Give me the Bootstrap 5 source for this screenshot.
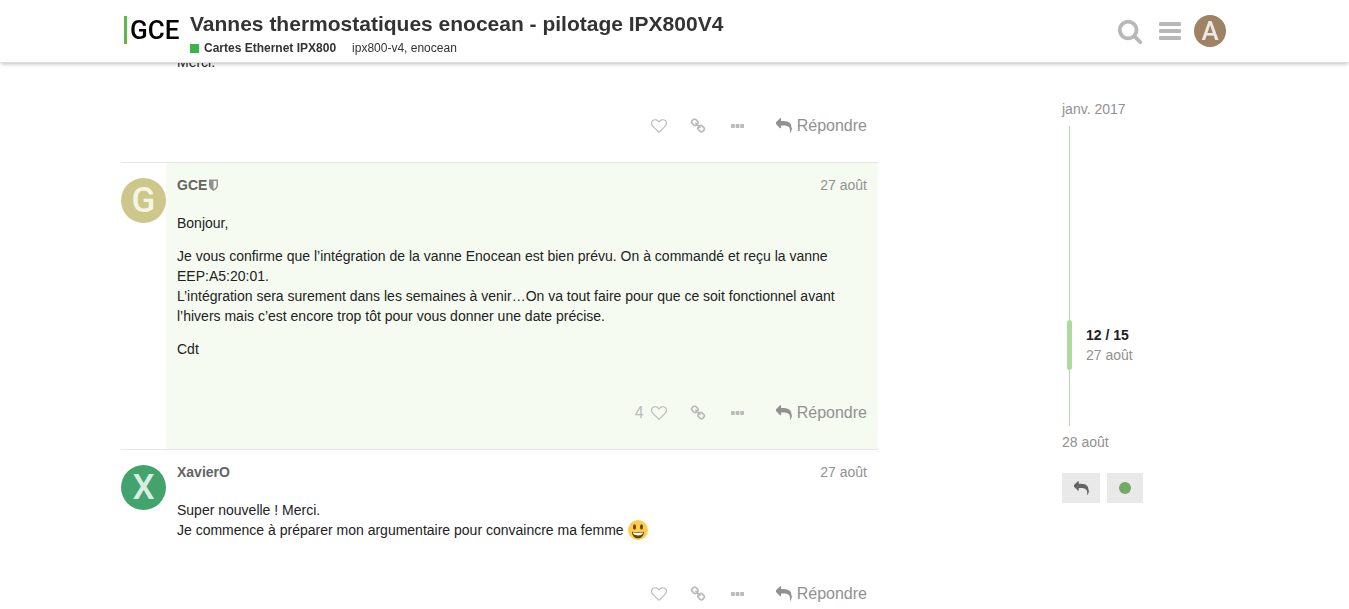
<!DOCTYPE html>
<html lang="fr">
<head>
<meta charset="utf-8">
<meta name="viewport" content="width=device-width, initial-scale=1">
<title>Vannes thermostatiques enocean - pilotage IPX800V4</title>
<link href="https://cdn.jsdelivr.net/npm/bootstrap@5.3.0/dist/css/bootstrap.min.css" rel="stylesheet">
<style>
body { font: 14px/20px "Liberation Sans", Arial, sans-serif; color: #222; background: #fff; }
a { color: inherit; text-decoration: none; }
svg { display: block; fill: currentColor; }
.wrap { max-width: 1107px; margin: 0 auto; }
.site-header { height: 63px; background: #fff; box-shadow: 0 2px 4px -1px rgba(0,0,0,.25); border-bottom: 1px solid #ddd; }
.logo { margin-left: 3px; width: 56px; color: #000; padding-bottom: 2px; }
.logo-bar { width: 3px; height: 28px; flex: none; background: #62b846; }
.logo-text { font: 500 26px/28px Roboto, sans-serif; margin-left: 3px; }
.topic-title { font-size: 21px; line-height: 28px; font-weight: 700; color: #333; }
.topic-meta { font-size: 12px; line-height: 20px; color: #333; }
.swatch { width: 9px; height: 9px; margin-right: 5px; background: #3ab54a; }
.topic-box { margin-left: 10px; padding-top: 6px; }
.head-icons { color: #b8b8b8; margin-right: 2px; }
.head-icons .menu-link { margin-right: 13px; }
.round { border-radius: 50%; display: flex; align-items: center; justify-content: center; flex: none; font-family: Roboto, sans-serif; font-weight: 500; color: rgba(255,255,255,.82); }
.round-sm { width: 32px; height: 32px; font-size: 26px; line-height: 32px; background: #9d8263; }
.round-lg { width: 45px; height: 45px; font-size: 35px; line-height: 46px; margin-top: 15px; }
.page { padding-top: 52px; }
.stream { flex: 0 1 757px; min-width: 0; }
.post { display: flex; }
.post + .post { border-top: 1px solid #e6e6e6; }
.post-body { flex: 1; min-width: 0; padding: 12px 11px 16px; }
.first .post-body { margin-left: 45px; padding-top: 0; }
.staff .post-body { background: #f5fbf1; }
.post-head { margin-bottom: 18px; }
.author { font-weight: 700; color: #646464; }
.author svg { margin-left: 2px; }
.muted { color: #919191; }
.cooked p { margin-bottom: 13px; }
.cooked p:last-child { margin-bottom: 0; }
.emoji { display: inline-block; width: 20px; height: 20px; vertical-align: middle; margin: -3px 0 -1px; }
.controls { margin-top: 34px; height: 40px; display: flex; justify-content: flex-end; align-items: center; color: #bababa; font-size: 16px; }
.controls button, .tl-actions button { border: 0; background: none; padding: 0; color: inherit; display: flex; align-items: center; }
.controls .icon-btn { width: 39px; height: 32px; justify-content: center; }
.controls .reply { color: #919191; margin-left: 19px; gap: 5px; }
.likes { margin-right: -4px; }
.timeline { margin-left: 184px; padding-top: 47px; width: 120px; }
.track { height: 300px; margin: 7px 0 6px 7px; border-left: 1px solid #b0dba4; padding-top: 194px; }
.handle { width: 5px; height: 50px; border-radius: 3px; background: #addb9f; margin-left: -3px; margin-right: 14px; }
.tl-actions { margin-top: 21px; gap: 7px; }
.tl-actions button { height: 30px; width: 38px; background: #e9e9e9; justify-content: center; color: #646464; }
.tl-actions .track-btn { width: 36px; color: #74a865; }
</style>
</head>
<body>
<svg class="d-none">
<symbol id="reply" viewBox="0 0 1792 1792"><path d="M1792 1120q0 166-127 451-3 7-10.500 24t-13.500 30-13 22q-12 17-28 17-15 0-23.500-10t-8.500-25q0-9 2.500-26.500t2.500-23.500q5-68 5-123 0-112-19.500-200.500t-54.500-153.500-90-112-118-77.500-147-46.500-167.500-24-189.500-7h-224v256q0 26-19 45t-45 19-45-19l-512-512q-19-19-19-45t19-45l512-512q19-19 45-19t45 19 19 45v256h224q713 0 875 403 53 134 53 333z"/></symbol>
<symbol id="heart" viewBox="0 0 1792 1792"><path d="M1664 596q0-81-21.500-143t-55-98.500-81.500-59.500-94-31-98-8-112 25.500-110.500 64-86.500 72-60 61.500q-18 22-49 22t-49-22q-24-28-60-61.500t-86.500-72-110.500-64-112-25.500-98 8-94 31-81.500 59.500-55 98.500-21.500 143q0 168 187 355l581 560 580-559q188-188 188-356zm128 0q0 221-229 450l-623 600q-18 18-44 18t-44-18l-624-602q-10-8-27.500-26t-55.500-65.500-68-97.500-53.500-121-23.500-138q0-220 127-344t351-124q62 0 126.500 21.500t120 58 95.500 68.500 76 68q36-36 76-68t95.500-68.500 120-58 126.500-21.500q224 0 351 124t127 344z"/></symbol>
<symbol id="chain" viewBox="0 0 1792 1792"><path d="M1520 1216q0-40-28-68l-208-208q-28-28-68-28-42 0-72 32 3 3 19 18.500t21.500 21.500 15 19 13 25.500 3.500 27.500q0 40-28 68t-68 28q-15 0-27.500-3.500t-25.500-13-19-15-21.500-21.500-18.500-19q-33 31-33 73 0 40 28 68l206 207q27 27 68 27 40 0 68-26l147-146q28-28 28-67zm-703-705q0-40-28-68l-206-207q-28-28-68-28-39 0-68 27l-147 146q-28 28-28 67 0 40 28 68l208 208q27 27 68 27 42 0 72-31-3-3-19-18.500t-21.500-21.500-15-19-13-25.500-3.500-27.500q0-40 28-68t68-28q15 0 27.500 3.500t25.500 13 19 15 21.500 21.500 18.500 19q33-31 33-73zm895 705q0 120-85 203l-147 146q-83 83-203 83-121 0-204-85l-206-207q-83-83-83-203 0-123 88-209l-88-88q-86 88-208 88-120 0-204-84l-208-208q-84-84-84-204t85-203l147-146q83-83 203-83 121 0 204 85l206 207q83 83 83 203 0 123-88 209l88 88q86-88 208-88 120 0 204 84l208 208q84 84 84 204z"/></symbol>
<symbol id="dots" viewBox="0 0 13 4"><rect width="3.800" height="4" rx=".8"/><rect x="4.600" width="3.800" height="4" rx=".8"/><rect x="9.200" width="3.800" height="4" rx=".8"/></symbol>
<symbol id="search" viewBox="0 0 1792 1792"><path d="M1216 832q0-185-131.500-316.500t-316.500-131.500-316.500 131.500-131.500 316.500 131.500 316.500 316.500 131.500 316.500-131.500 131.500-316.500zm512 832q0 52-38 90t-90 38q-54 0-90-38l-343-342q-179 124-399 124-143 0-273.500-55.500t-225-150-150-225-55.500-273.500 55.500-273.500 150-225 225-150 273.500-55.500 273.500 55.500 225 150 150 225 55.500 273.500q0 220-124 399l343 343q37 37 37 90z"/></symbol>
</svg>

<header class="site-header fixed-top">
  <div class="wrap h-100 d-flex align-items-center">
    <a href="#" class="logo d-flex align-items-center"><span class="logo-bar"></span><span class="logo-text">GCE</span></a>
    <div class="topic-box flex-grow-1">
      <h1 class="topic-title mb-0"><a href="#">Vannes thermostatiques enocean - pilotage IPX800V4</a></h1>
      <div class="topic-meta d-flex align-items-center">
        <span class="swatch"></span><a href="#" class="fw-bold">Cartes Ethernet IPX800</a>
        <span class="ms-3"><a href="#">ipx800-v4</a>, <a href="#">enocean</a></span>
      </div>
    </div>
    <nav class="head-icons d-flex align-items-center">
      <a href="#" aria-label="Rechercher" class="me-3"><svg width="26" height="26"><use href="#search"/></svg></a>
      <a href="#" aria-label="Menu" class="menu-link"><svg width="22" height="18"><rect width="22" height="4" rx="1"/><rect y="7" width="22" height="4" rx="1"/><rect y="14" width="22" height="4" rx="1"/></svg></a>
      <a href="#" class="round round-sm">A</a>
    </nav>
  </div>
</header>

<main class="page vh-100 overflow-hidden">
  <div class="wrap d-flex align-items-start">
    <div class="stream">
      <article class="post first">
        <div class="post-body">
          <div class="cooked"><p>Merci.</p></div>
          <div class="controls">
            <button class="icon-btn" aria-label="Aimer"><svg width="16" height="16"><use href="#heart"/></svg></button>
            <button class="icon-btn" aria-label="Lien"><svg width="16" height="16"><use href="#chain"/></svg></button>
            <button class="icon-btn" aria-label="Plus"><svg width="13" height="4"><use href="#dots"/></svg></button>
            <button class="reply"><svg width="16" height="16"><use href="#reply"/></svg>Répondre</button>
          </div>
        </div>
      </article>
      <article class="post staff">
        <a href="#" class="round round-lg" style="background:#cdc78a">G</a>
        <div class="post-body">
          <div class="post-head d-flex justify-content-between">
            <div class="d-flex align-items-center author"><a href="#">GCE</a><svg class="muted" width="9" height="12" viewBox="0 0 9 12"><path fill-rule="evenodd" d="M0 .5h9v6C9 9 6.500 11 4.500 12 2.500 11 0 9 0 6.500zM4.500 2v8.300C6 9.300 7.500 8 7.500 6.500V2z"/></svg></div>
            <a href="#" class="muted">27 août</a>
          </div>
          <div class="cooked">
            <p>Bonjour,</p>
            <p>Je vous confirme que l’intégration de la vanne Enocean est bien prévu. On à commandé et reçu la vanne EEP:A5:20:01.<br>L’intégration sera surement dans les semaines à venir…On va tout faire pour que ce soit fonctionnel avant l’hivers mais c’est encore trop tôt pour vous donner une date précise.</p>
            <p>Cdt</p>
          </div>
          <div class="controls">
            <span class="likes">4</span>
            <button class="icon-btn" aria-label="Aimer"><svg width="16" height="16"><use href="#heart"/></svg></button>
            <button class="icon-btn" aria-label="Lien"><svg width="16" height="16"><use href="#chain"/></svg></button>
            <button class="icon-btn" aria-label="Plus"><svg width="13" height="4"><use href="#dots"/></svg></button>
            <button class="reply"><svg width="16" height="16"><use href="#reply"/></svg>Répondre</button>
          </div>
        </div>
      </article>
      <article class="post">
        <a href="#" class="round round-lg" style="background:#43a36c">X</a>
        <div class="post-body">
          <div class="post-head d-flex justify-content-between">
            <a href="#" class="author">XavierO</a>
            <a href="#" class="muted">27 août</a>
          </div>
          <div class="cooked">
            <p>Super nouvelle ! Merci.<br>Je commence à préparer mon argumentaire pour convaincre ma femme <svg class="emoji" viewBox="0 0 20 20" role="img" aria-label="sourire"><circle cx="10" cy="10" r="10" fill="#ffcc4d"/><ellipse cx="6.500" cy="7" rx="1.500" ry="2.800" fill="#664500"/><ellipse cx="13.500" cy="7" rx="1.500" ry="2.800" fill="#664500"/><path d="M4 11.700q6 1.200 12 0c0 4-2.500 6.600-6 6.600s-6-2.600-6-6.600z" fill="#664500"/><path d="M5 12.600q5 .8 10 0c-.2 1.900-1.200 2.800-5 2.800s-4.800-.9-5-2.800z" fill="#fff"/></svg></p>
          </div>
          <div class="controls">
            <button class="icon-btn" aria-label="Aimer"><svg width="16" height="16"><use href="#heart"/></svg></button>
            <button class="icon-btn" aria-label="Lien"><svg width="16" height="16"><use href="#chain"/></svg></button>
            <button class="icon-btn" aria-label="Plus"><svg width="13" height="4"><use href="#dots"/></svg></button>
            <button class="reply"><svg width="16" height="16"><use href="#reply"/></svg>Répondre</button>
          </div>
        </div>
      </article>
    </div>
    <aside class="timeline">
      <a href="#" class="d-block muted">janv. 2017</a>
      <div class="track">
        <div class="d-flex align-items-center"><div class="handle"></div><div><b>12 / 15</b><div class="muted">27 août</div></div></div>
      </div>
      <a href="#" class="d-block muted">28 août</a>
      <div class="tl-actions d-flex">
        <button aria-label="Répondre"><svg width="15" height="15"><use href="#reply"/></svg></button>
        <button class="track-btn" aria-label="Suivi"><svg width="12" height="12"><circle cx="6" cy="6" r="6"/></svg></button>
      </div>
    </aside>
  </div>
</main>
<script src="https://cdn.jsdelivr.net/npm/bootstrap@5.3.0/dist/js/bootstrap.bundle.min.js"></script>
</body>
</html>
